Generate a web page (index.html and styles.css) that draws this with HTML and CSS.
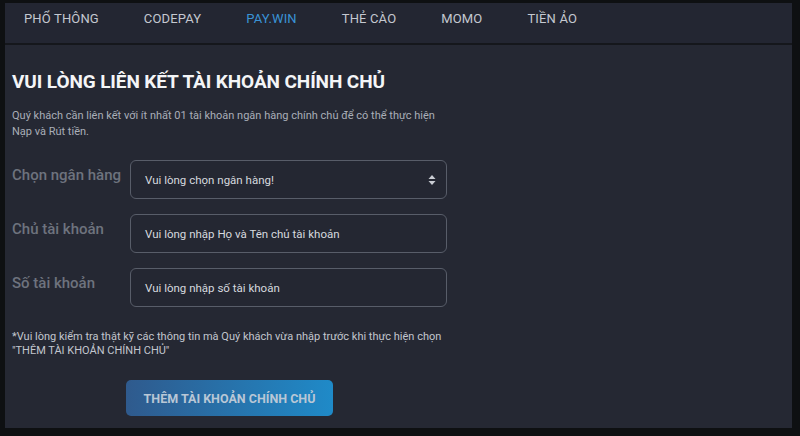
FILE: index.html
```html
<!DOCTYPE html>
<html lang="vi">
<head>
  <meta charset="UTF-8" />
  <meta name="viewport" content="width=device-width, initial-scale=1.0" />
  <title>Liên kết tài khoản</title>
  <link rel="stylesheet" href="styles.css">
</head>
<body>
  <div class="frame">
    <nav class="tabs">
      <a class="tab">PHỔ THÔNG</a>
      <a class="tab">CODEPAY</a>
      <a class="tab active">PAY.WIN</a>
      <a class="tab">THẺ CÀO</a>
      <a class="tab">MOMO</a>
      <a class="tab">TIỀN ẢO</a>
    </nav>
    <div class="panel">
      <h1 class="title">VUI LÒNG LIÊN KẾT TÀI KHOẢN CHÍNH CHỦ</h1>
      <p class="intro">Quý khách cần liên kết với ít nhất 01 tài khoản ngân hàng chính chủ để có thể thực hiện Nạp và Rút tiền.</p>

      <div class="form">
        <div class="row">
          <label class="label">Chọn ngân hàng</label>
          <div class="field select">
            <span>Vui lòng chọn ngân hàng!</span>
            <svg class="caret" width="8" height="12" viewBox="0 0 8 12">
              <path d="M4 1 L7.5 5 L0.5 5 Z M4 11 L7.5 7 L0.5 7 Z" fill="#c9ccd3"/>
            </svg>
          </div>
        </div>
        <div class="row">
          <label class="label">Chủ tài khoản</label>
          <div class="field">Vui lòng nhập Họ và Tên chủ tài khoản</div>
        </div>
        <div class="row">
          <label class="label">Số tài khoản</label>
          <div class="field">Vui lòng nhập số tài khoản</div>
        </div>
      </div>

      <p class="note">*Vui lòng kiểm tra thật kỹ các thông tin mà Quý khách vừa nhập trước khi thực hiện chọn<br>"THÊM TÀI KHOẢN CHÍNH CHỦ"</p>

      <div class="actions">
        <button class="submit">THÊM TÀI KHOẢN CHÍNH CHỦ</button>
      </div>
    </div>
  </div>
</body>
</html>
```

FILE: styles.css
```css
html, body {
  margin: 0;
  height: 100%;
}

body {
  background-color: #0e1012;
  font-family: Roboto, "Liberation Sans", Arial, sans-serif;
  overflow: hidden;
}

.frame {
  width: 787px;
  margin-left: 5px;
  padding-top: 3px;
  display: flex;
  flex-direction: column;
  height: 425px;
}

.tabs {
  display: flex;
  align-items: flex-start;
  gap: 45px;
  height: 42px;
  box-sizing: border-box;
  padding: 8px 0 0 19px;
  background-color: #232632;
  border-bottom: 2px solid #15171c;
}

.tab {
  font-size: 13px;
  color: #c4c8d0;
  cursor: pointer;
  letter-spacing: 0.15px;
}

.tab.active {
  color: #3a93d6;
}

.panel {
  flex: 1;
  background-color: #252833;
  padding: 25px 7px 0;
}

.title {
  margin: 0;
  font-size: 19px;
  font-weight: 700;
  color: #f4f5f7;
  letter-spacing: -0.1px;
  line-height: 24px;
}

.intro {
  margin: 14px 0 0;
  width: 440px;
  font-size: 11px;
  line-height: 16px;
  color: #a9aeb8;
}

.form {
  margin-top: 20px;
  display: flex;
  flex-direction: column;
  gap: 15px;
}

.row {
  display: flex;
  align-items: flex-start;
}

.label {
  width: 118px;
  padding-top: 6px;
  font-size: 15px;
  font-weight: 500;
  color: #6e737e;
}

.field {
  box-sizing: border-box;
  width: 317px;
  height: 39px;
  display: flex;
  align-items: center;
  padding: 0 14px;
  border: 1px solid #585d69;
  border-radius: 6px;
  background-color: #242732;
  font-size: 11.5px;
  color: #d6d9df;
}

.select {
  justify-content: space-between;
  padding-right: 10px;
}

.note {
  margin: 23px 0 0;
  font-size: 11px;
  line-height: 14px;
  color: #c2c6ce;
}

.actions {
  margin-top: 22px;
  padding-left: 114px;
}

.submit {
  width: 207px;
  height: 36px;
  border: none;
  border-radius: 5px;
  background: linear-gradient(90deg, #2f5a8d, #1f8ac8);
  color: #b9c7d6;
  font-family: inherit;
  font-size: 12.5px;
  font-weight: 700;
  cursor: pointer;
}
```
